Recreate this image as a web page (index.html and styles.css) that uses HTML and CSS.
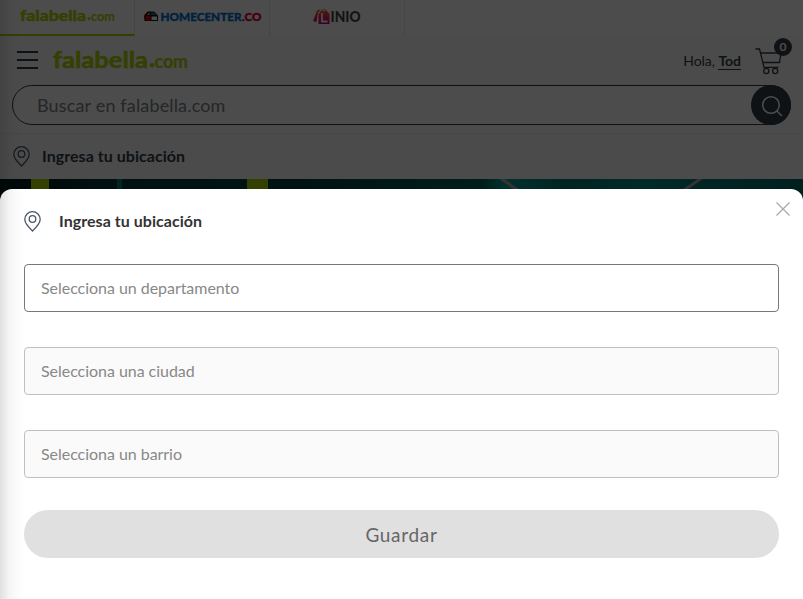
FILE: index.html
```html
<!DOCTYPE html>
<html lang="es">
<head>
<meta charset="utf-8">
<title>falabella.com</title>
<link rel="stylesheet" href="styles.css">
</head>
<body>
<div class="page">
  <nav class="stores">
    <a class="store store-active">
      <svg class="store-logo" width="134" height="34" viewBox="0 0 134 34"><text class="brand" x="20" y="20.500" font-size="16" textLength="66" lengthAdjust="spacingAndGlyphs">falabella</text><circle cx="89" cy="18.700" r="1.600" fill="#aad500"/><text class="brand brand-light" x="91" y="20.500" font-size="13" textLength="24" lengthAdjust="spacingAndGlyphs">com</text></svg>
    </a>
    <a class="store">
      <svg class="store-logo" width="134" height="35" viewBox="0 0 134 35">
        <path d="M9 15.500 12.500 11.500H19L23 15.500V21H9.500Z" fill="#111"/>
        <path d="M10.500 15.500h5v5h-5z" fill="#d8001c"/><path d="M16.500 16.500H22V20h-5.500z" fill="#fff"/><path d="M16 12.500h3l2.500 2.500H16z" fill="#0072ce"/><path d="M12 14.500l2.500-2V15z" fill="#ffd500"/>
        <text class="home" x="25.500" y="21" textLength="81" lengthAdjust="spacingAndGlyphs">HOMECENTER</text><text class="home home-red" x="107" y="21" textLength="19.500" lengthAdjust="spacingAndGlyphs">.CO</text>
      </svg>
    </a>
    <a class="store">
      <svg class="store-logo" width="134" height="35" viewBox="0 0 134 35">
        <defs><linearGradient id="bag" x1="0" y1="0" x2="0" y2="1"><stop offset="0" stop-color="#ff6a13"/><stop offset=".5" stop-color="#e6285a"/><stop offset="1" stop-color="#c4008f"/></linearGradient></defs>
        <path d="M43 21 47 10.500 51 9l-3 4-1.500 9zM48.500 14l2.500-3 3-2.500 3 2.500 2.500 3v10H48.500z" fill="url(#bag)"/>
        <path d="M52 13v8.500h5.500" fill="none" stroke="#fff" stroke-width="1.800"/><circle cx="54" cy="10.500" r="1" fill="#fff"/>
        <text class="linio" x="60.500" y="22.300" textLength="30" lengthAdjust="spacingAndGlyphs">INIO</text>
      </svg>
    </a>
  </nav>
  <header class="header">
    <div class="topbar">
      <span class="burger"><i></i><i></i><i></i></span>
      <svg class="logo" width="142" height="36" viewBox="0 0 142 36"><text class="brand" x="2" y="25" font-size="23" textLength="95" lengthAdjust="spacingAndGlyphs">falabella</text><circle cx="101" cy="22.300" r="2.300" fill="#aad500"/><text class="brand brand-light" x="103.500" y="25" font-size="18.500" textLength="33.500" lengthAdjust="spacingAndGlyphs">com</text></svg>
      <span class="hello">Hola, <b>Tod</b></span>
      <span class="cart">
        <svg width="28" height="28" viewBox="0 0 28 28" fill="none" stroke="#343e49" stroke-width="1.300"><path d="M.5 2H4.500L9 20.300H23.500M5.200 6H26L24.500 15.500H8"/><circle cx="11.300" cy="24" r="2.600"/><circle cx="20.200" cy="24" r="2.600"/></svg>
        <span class="badge">0</span>
      </span>
    </div>
    <div class="search">
      <span class="search-text">Buscar en falabella.com</span>
      <span class="search-button"><svg width="22" height="22" viewBox="0 0 22 22" fill="none" stroke="#fff" stroke-width="1.500"><circle cx="10" cy="10" r="8.300"/><path d="M16 16l5 5"/></svg></span>
    </div>
  </header>
  <div class="location">
    <svg class="pin" width="17" height="21" viewBox="0 0 17 21"><path d="M8.500 20C5 16.700.8 12.400.8 8.300a7.700 7.600 0 0 1 15.400 0C16.200 12.400 12 16.700 8.500 20Z"/><circle cx="8.500" cy="8" r="3.300"/></svg>
    <b class="label">Ingresa tu ubicación</b>
  </div>
  <svg class="banner" width="803" height="30" viewBox="0 0 803 30">
    <defs><linearGradient id="sea"><stop offset="0" stop-color="#001d1d"/><stop offset=".14" stop-color="#003838"/><stop offset=".3" stop-color="#004541"/><stop offset=".35" stop-color="#003d39"/><stop offset=".6" stop-color="#00635a"/><stop offset=".63" stop-color="#00a59c"/><stop offset=".7" stop-color="#007a73"/><stop offset=".8" stop-color="#008c87"/><stop offset="1" stop-color="#006b68"/></linearGradient></defs>
    <path fill="url(#sea)" d="M0 0h803v30H0z"/><path fill="#aad500" d="M31 0h18v30H31zM247 0h21v30h-21z"/><path fill="#00807a" d="M117 0h5v30h-5z"/><path d="M499-2l40 28M703-2l-40 28" stroke="#b8a8a8" stroke-width="3"/>
  </svg>
</div>
<div class="overlay"></div>
<section class="modal">
  <svg class="close" width="16" height="16" viewBox="0 0 16 16"><path d="M1.500 1.500l13 13M14.500 1.500l-13 13"/></svg>
  <h2 class="title"><svg class="pin" width="17" height="21" viewBox="0 0 17 21"><path d="M8.500 20C5 16.700.8 12.400.8 8.300a7.700 7.600 0 0 1 15.400 0C16.200 12.400 12 16.700 8.500 20Z"/><circle cx="8.500" cy="8" r="3.300"/></svg><span class="label">Ingresa tu ubicación</span></h2>
  <div class="fields">
    <div class="field">Selecciona un departamento</div>
    <div class="field field-off">Selecciona una ciudad</div>
    <div class="field field-off">Selecciona un barrio</div>
  </div>
  <div class="save">Guardar</div>
</section>
<div class="edge"></div>
</body>
</html>
```
FILE: styles.css
```css
* { box-sizing: border-box; }
body { margin: 0; height: 599px; overflow: hidden; position: relative; background: #fff; font-family: Lato, sans-serif; color: #343e49; }
svg { display: block; flex: none; }
.stores { display: flex; height: 36px; background: #fff; }
.store { width: 135px; border-right: 1px solid #e8e8e8; }
.store-active { border-bottom: 2px solid #aad500; }
.brand { font-family: Lato, sans-serif; font-weight: 700; fill: #aad500; stroke: #aad500; stroke-width: .5px; stroke-linejoin: round; }
.brand-light { stroke-width: .2px; }
.home { font: 900 12px Lato, sans-serif; fill: #0072ce; stroke: #0072ce; stroke-width: .4px; }
.home-red { fill: #e4002b; stroke: #e4002b; }
.linio { font: 900 15px Lato, sans-serif; fill: #444; }
.header { height: 98px; padding: 0 12px; background: #fafafa; border-bottom: 1px solid #eee; }
.topbar { display: flex; align-items: center; height: 49px; padding-left: 5px; }
.burger { display: flex; flex-direction: column; gap: 6px; width: 21px; padding-bottom: 2px; }
.burger i { height: 2px; background: #343e49; }
.logo { margin-left: 13px; }
.hello { margin-left: auto; font-size: 14px; line-height: 16px; letter-spacing: -.05px; }
.hello b { border-bottom: 1px solid #343e49; }
.cart { position: relative; margin: 0 8px 0 14px; }
.badge { position: absolute; left: 19px; top: -9px; width: 18px; height: 18px; border-radius: 50%; background: #343e49; color: #fff; font: 700 12px/18px Lato, sans-serif; text-align: center; }
.search { display: flex; align-items: center; justify-content: space-between; height: 40px; border: 1px solid #343e49; border-radius: 20px; background: #fff; padding-left: 24px; }
.search-text { font-size: 18px; letter-spacing: .16px; color: #7a7f85; }
.search-button { display: grid; place-items: center; width: 40px; height: 40px; margin-right: -1px; padding: 1px 0 0 1px; border-radius: 50%; background: #343e49; }
.location { display: flex; align-items: center; gap: 12px; height: 45px; padding-left: 13px; font-size: 16px; background: #fafafa; }
.label { padding-bottom: 2px; letter-spacing: .04px; }
.pin { fill: none; stroke: #495867; stroke-width: 1.3; }
.overlay { position: absolute; inset: 0; background: rgba(0, 0, 0, .7); }
.modal { position: absolute; left: 0; right: 0; top: 189px; bottom: 0; padding: 21px 24px; border-radius: 12px 12px 0 0; background: #fff; }
.close { position: absolute; right: 12px; top: 12px; fill: none; stroke: #aaa; stroke-width: 1.3; }
.title { display: flex; align-items: center; gap: 18px; height: 22px; margin: 0 0 32px; font-size: 16px; color: #333; }
.fields { display: grid; gap: 35px; }
.field { height: 48px; padding-left: 16px; border: 1px solid #777; border-radius: 4px; font-size: 16px; letter-spacing: -.04px; line-height: 46px; color: #888; }
.field-off { border-color: #bfbfbf; background: #fafafa; }
.save { height: 48px; margin-top: 32px; border-radius: 24px; background: #e0e0e0; color: #666; font-size: 19px; letter-spacing: .7px; line-height: 50px; text-align: center; }
.edge { position: absolute; left: 0; top: 0; bottom: 0; width: 24px; background: linear-gradient(90deg, rgba(0,0,0,.12), rgba(0,0,0,.04) 40%, rgba(0,0,0,.01) 80%, transparent); }
```
